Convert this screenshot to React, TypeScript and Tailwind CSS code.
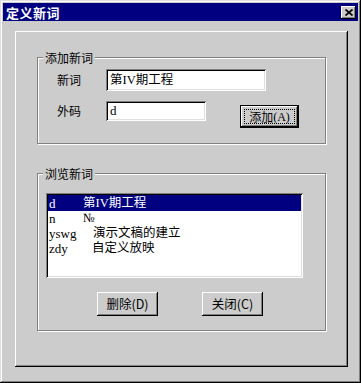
import React from 'react';

const raised =
  'shadow-[inset_-1px_-1px_#000,inset_1px_1px_#fff,inset_-2px_-2px_#808080]';
const sunken =
  'shadow-[inset_1px_1px_#808080,inset_-1px_-1px_#fff,inset_2px_2px_#000,inset_-2px_-2px_#dfdfdf]';

interface Entry {
  code: string;
  word: string;
  wordCls: string;
  rowCls: string;
  selected?: boolean;
}

const entries: Entry[] = [
  { code: 'd', word: '第IV期工程', wordCls: 'pl-0', rowCls: 'h-[16px]', selected: true },
  { code: 'n', word: '№', wordCls: 'pl-0', rowCls: 'h-[15px]' },
  { code: 'yswg', word: '演示文稿的建立', wordCls: 'pl-[10px]', rowCls: 'h-[15px]' },
  { code: 'zdy', word: '自定义放映', wordCls: 'pl-[9px]', rowCls: 'h-[15px]' },
];

const GroupBox: React.FC<{ title: string; className: string; children: React.ReactNode }> = ({
  title,
  className,
  children,
}) => (
  <div
    className={`relative ml-[22px] w-[289px] border border-[#808080] shadow-[1px_1px_0_#fff,inset_1px_1px_0_#fff] ${className}`}
  >
    <span className="absolute -top-[8px] left-[5px] px-[2px] bg-[#cccccc] leading-[15px]">{title}</span>
    {children}
  </div>
);

const Button: React.FC<{ label: string; className?: string }> = ({ label, className = '' }) => (
  <button className={`w-[61px] h-[24px] bg-[#cccccc] ${raised} flex items-center justify-center leading-none text-[12.5px] ${className}`}>
    {label}
  </button>
);

export default function App() {
  return (
    <div className="w-[361px] h-[383px] bg-[#cccccc] p-[3px] flex flex-col text-[12px] text-black select-none font-['Noto_Sans_CJK_SC',sans-serif] shadow-[inset_-1px_-1px_#000,inset_1px_1px_#dfdfdf,inset_-2px_-2px_#808080,inset_2px_2px_#fff]">
      {/* title bar */}
      <div className="h-[18px] bg-[#000080] flex items-center justify-between pl-[3px] pr-[2px]">
        <span className="text-white font-bold text-[13px] leading-none tracking-[0.5px]">定义新词</span>
        <div className={`w-[15px] h-[13px] bg-[#cccccc] ${raised} flex items-center justify-center`}>
          <svg width="8" height="7" viewBox="0 0 8 7">
            <path d="M0.5 0.5 L7.5 6.5 M7.5 0.5 L0.5 6.5" stroke="#000" strokeWidth="1.7" fill="none" />
          </svg>
        </div>
      </div>

      {/* inner panel */}
      <div className={`mt-[10px] ml-[12px] w-[333px] h-[336px] ${raised} pt-[26px]`}>
        <GroupBox title="添加新词" className="h-[87px] pt-[11px] pl-[19px]">
          <div className="flex items-center h-[22px]">
            <span className="w-[49px]">新词</span>
            <div className={`w-[160px] h-[22px] bg-white ${sunken} pl-[4px] flex items-center text-[12.5px] font-['Liberation_Serif','Noto_Sans_CJK_SC',serif]`}>
              第IV期工程
            </div>
          </div>
          <div className="flex items-start mt-[10px]">
            <span className="w-[49px] h-[20px] flex items-center">外码</span>
            <div className={`w-[100px] h-[20px] bg-white ${sunken} pl-[4px] flex items-center text-[13px] font-['Liberation_Serif',serif]`}>
              d
            </div>
            <button className="ml-[34px] mt-[4px] w-[59px] h-[23px] border border-black bg-[#cccccc] p-0">
              <div className={`w-full h-full ${raised} p-[3px]`}>
                <div className="w-full h-full border border-dotted border-black flex items-center justify-center leading-none">
                  添加<span className="font-['Liberation_Serif',serif]">(A)</span>
                </div>
              </div>
            </button>
          </div>
        </GroupBox>

        <GroupBox title="浏览新词" className="mt-[29px] h-[158px] pt-[19px] pl-[8px]">
          <div className={`w-[257px] h-[85px] bg-white ${sunken} p-[2px]`}>
            {entries.map((e) => (
              <div
                key={e.code}
                className={`${e.rowCls} flex items-center pl-[1px] font-['Liberation_Serif','Noto_Sans_CJK_SC',serif] text-[12.5px] leading-none ${
                  e.selected ? 'bg-[#000080] text-white' : ''
                }`}
              >
                <span className="w-[34px] shrink-0 text-[13px]">{e.code}</span>
                <span className={`whitespace-nowrap ${e.wordCls}`}>{e.word}</span>
              </div>
            ))}
          </div>
          <div className="flex mt-[14px] ml-[51px] gap-[44px]">
            <Button label="删除(D)" />
            <Button label="关闭(C)" />
          </div>
        </GroupBox>
      </div>
    </div>
  );
}
